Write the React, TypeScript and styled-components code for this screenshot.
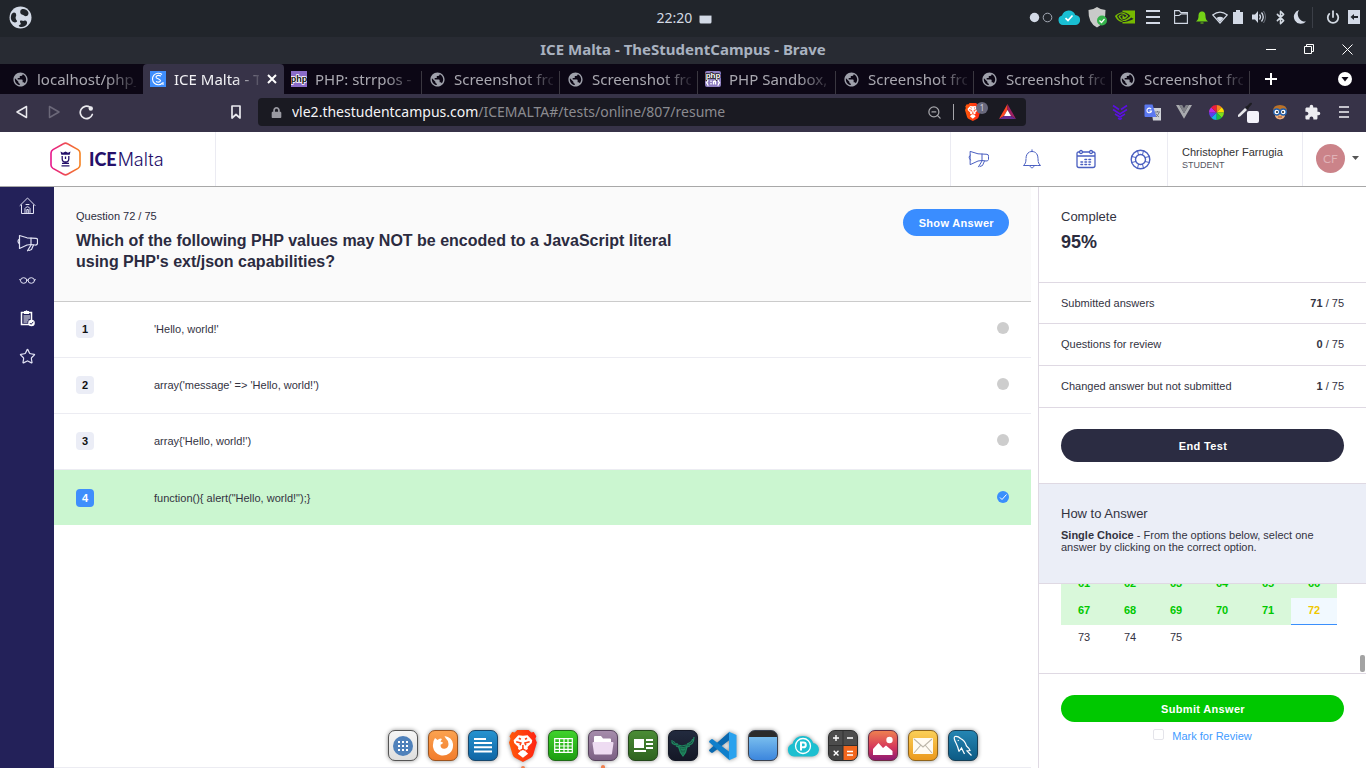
import React from "react";
import styled, { createGlobalStyle, css } from "styled-components";
import { MdPublic, MdExtension } from "react-icons/md";
import { FaLock } from "react-icons/fa";
import { SiNvidia } from "react-icons/si";
import { Star, Bluetooth, Power, ZoomOut } from "lucide-react";

const ui = `"Noto Sans", "Open Sans", sans-serif`;
const body = `"Liberation Sans", Arial, sans-serif`;

const Global = createGlobalStyle`
  *, *::before, *::after { box-sizing: border-box; }
  body { margin: 0; background: #fff; font-family: ${body}; font-size: 11px; color: #2c2c3e; }
  button { font: inherit; color: inherit; border: 0; padding: 0; background: none; cursor: pointer; }
  a { color: inherit; text-decoration: none; }
  h1, h2, p, dl, dd, dt, ol, ul { margin: 0; padding: 0; list-style: none; }
  svg { display: block; flex: none; }
`;

const Screen = styled.div`
  display: flex;
  flex-direction: column;
  height: 100vh;
  overflow: hidden;
`;

/* ---------- desktop panel ---------- */

const Panel = styled.header`
  display: grid;
  grid-template-columns: 1fr auto 1fr;
  align-items: center;
  flex: none;
  height: 37px;
  padding: 0 6px 3px 9px;
  background: #21252b;
  color: #d3dae3;
  font-family: ${ui};
`;

const Clock = styled.div`
  display: flex;
  align-items: center;
  gap: 7px;
  font-size: 14px;
`;

const Tray = styled.div`
  display: flex;
  align-items: center;
  justify-content: flex-end;
`;

const TraySlot = styled.span<{ $w: number }>`
  display: flex;
  align-items: center;
  justify-content: center;
  flex: none;
  width: ${(p) => p.$w}px;
`;

const TrayRule = styled.span`
  width: 1px;
  height: 21px;
  margin-right: 4px;
  background: #3b3f47;
`;

const TitleBar = styled.div`
  display: grid;
  grid-template-columns: 1fr auto 1fr;
  align-items: center;
  flex: none;
  height: 27px;
  padding-bottom: 3px;
  background: #282b33;
  color: #a9b2c0;
  font: 700 15px/24px ${ui};
`;

const WindowButtons = styled.div`
  display: flex;
  justify-content: flex-end;
`;

const WindowButton = styled.button`
  display: flex;
  align-items: center;
  justify-content: center;
  width: 38px;
  height: 24px;
`;

/* ---------- browser ---------- */

const TabStrip = styled.div`
  display: flex;
  flex: none;
  height: 30px;
  padding-left: 5px;
  background: #0c0715;
  font: 400 15px/28px ${ui};
`;

const Tab = styled.div<{ $active?: boolean; $rule?: boolean }>`
  position: relative;
  display: flex;
  align-items: center;
  gap: 8px;
  flex: none;
  width: ${(p) => (p.$active ? 141 : 138)}px;
  padding: 0 7px;
  color: ${(p) => (p.$active ? "#f2f2f5" : "#a9a8b0")};
  ${(p) =>
    p.$active &&
    css`
      background: #373348;
      border-radius: 4px 4px 0 0;
    `}
  ${(p) =>
    p.$rule &&
    css`
      &::after {
        content: "";
        position: absolute;
        right: 0;
        top: 7px;
        bottom: 0;
        width: 1px;
        background: #3a3740;
      }
    `}
`;

const TabText = styled.span`
  flex: 1;
  min-width: 0;
  overflow: hidden;
  white-space: nowrap;
  mask-image: linear-gradient(to right, #000 70%, transparent 105%);
`;

const StripButton = styled.button<{ $push?: boolean }>`
  display: flex;
  align-items: center;
  justify-content: center;
  width: 42px;
  ${(p) => p.$push && "margin-left: auto;"}
`;

const Toolbar = styled.div`
  display: flex;
  align-items: center;
  flex: none;
  height: 38px;
  padding: 0 6px 2px;
  background: #373348;
  color: #e9e9ee;
`;

const ToolButton = styled.button<{ $bookmark?: boolean }>`
  position: relative;
  display: flex;
  align-items: center;
  justify-content: center;
  flex: none;
  width: 32px;
  height: 32px;
  ${(p) => p.$bookmark && "margin: 0 6px 0 118px;"}
`;

const AddressBar = styled.div`
  display: flex;
  align-items: center;
  flex: 1;
  min-width: 0;
  height: 28px;
  margin-right: 78px;
  padding: 0 10px 0 13px;
  border-radius: 4px;
  background: #1a1a22;
  font: 400 14px/28px ${ui};
`;

const Url = styled.span`
  flex: 1;
  min-width: 0;
  margin-left: 10px;
  overflow: hidden;
  white-space: nowrap;
  color: #8b8b90;
  b { font-weight: 400; color: #f4f4f6; }
`;

const AddressRule = styled.span`
  width: 1px;
  height: 16px;
  margin: 0 11px;
  background: #a6a6ab;
`;

const Shield = styled.span`
  position: relative;
  display: flex;
  width: 17px;
  margin-right: 17px;
`;

const ShieldCount = styled.span`
  position: absolute;
  left: 11px;
  top: -1px;
  width: 12px;
  height: 12px;
  border-radius: 6px;
  background: #68687c;
  color: #d5d5e2;
  font-size: 8px;
  line-height: 12px;
  text-align: center;
`;

/* ---------- site header ---------- */

const SiteHeader = styled.header`
  display: flex;
  flex: none;
  height: 55px;
  border-bottom: 1px solid #a8a8a8;
  background: #fff;
`;

const LogoLink = styled.a`
  display: flex;
  align-items: center;
  gap: 8px;
  width: 216px;
  padding-left: 50px;
  border-right: 1px solid #ebebf2;
  color: #25106a;
  font: 300 18px/24px Inter, sans-serif;
  b { font-family: Lato, sans-serif; font-weight: 900; margin-right: 1px; }
`;

const HeaderNav = styled.nav`
  display: flex;
  margin-left: auto;
  border: solid #ebebf2;
  border-width: 0 1px;
  color: #4a5fc1;
`;

const HeaderButton = styled.button`
  display: flex;
  align-items: center;
  justify-content: center;
  width: 54px;
`;

const UserBlock = styled.div`
  width: 135px;
  padding: 14px 0 0 14px;
  border-right: 1px solid #ebebf2;
  font-size: 11px;
  line-height: 13px;
  color: #333;
  small { display: block; font-size: 9px; line-height: 12px; color: #55555f; }
`;

const AccountButton = styled.button`
  display: flex;
  align-items: center;
  gap: 7px;
  width: 63px;
  padding: 0 0 2px 13px;
`;

const Avatar = styled.span`
  width: 29px;
  height: 29px;
  border-radius: 50%;
  background: #cb8389;
  color: #e0b2b6;
  font: 400 12px/29px Lato, sans-serif;
  text-align: center;
`;

/* ---------- page ---------- */

const Page = styled.div`
  display: flex;
  flex: 1;
  min-height: 0;
`;

const Sidebar = styled.nav`
  flex: none;
  width: 54px;
  background: #232159;
  color: #e2e3f4;
`;

const SideList = styled.ul`
  display: grid;
  grid-auto-rows: 1fr;
  height: 188px;
`;

const SideLink = styled.a`
  display: flex;
  align-items: center;
  justify-content: center;
  height: 100%;
`;

const Main = styled.main`
  flex: 1;
  min-width: 0;
  margin-right: 7px;
  border-bottom: 1px solid #ececf2;
`;

const QuestionHead = styled.div`
  display: flex;
  justify-content: space-between;
  align-items: flex-start;
  padding: 22px 22px 29px;
  border-bottom: 1px solid #cbcbcb;
  background: #fafafa;
`;

const QuestionNumber = styled.p`
  margin-bottom: 6px;
  font-size: 11px;
  line-height: 15px;
`;

const QuestionTitle = styled.h1`
  max-width: 640px;
  font-size: 16px;
  line-height: 21px;
  color: #2b2b40;
`;

const PillButton = styled.button<{ $tone: string; $tall?: boolean; $wide?: boolean }>`
  flex: none;
  width: ${(p) => (p.$wide ? "100%" : "auto")};
  height: ${(p) => (p.$tall ? 33 : 27)}px;
  padding: 0 15px 0 16px;
  border-radius: 17px;
  background: ${(p) => p.$tone};
  color: #fff;
  font-size: 11px;
  font-weight: 700;
  letter-spacing: 0.03em;
`;

const Option = styled.label<{ $chosen?: boolean }>`
  display: flex;
  align-items: center;
  height: 56px;
  padding: ${(p) => (p.$chosen ? "1px 22px 0" : "0 22px 1px")};
  border-bottom: 1px solid ${(p) => (p.$chosen ? "#fff" : "#ececf2")};
  background: ${(p) => (p.$chosen ? "#cbf6d0" : "#fff")};
  color: #33333f;
`;

const OptionNumber = styled.span<{ $chosen?: boolean }>`
  width: 18px;
  height: 18px;
  border-radius: 4px;
  background: ${(p) => (p.$chosen ? "#3f8efc" : "#ebedf6")};
  color: ${(p) => (p.$chosen ? "#fff" : "#111")};
  font-weight: 700;
  line-height: 18px;
  text-align: center;
`;

const OptionText = styled.span`
  flex: 1;
  margin-left: 60px;
`;

const Radio = styled.input`
  appearance: none;
  width: 12px;
  height: 12px;
  margin: 0 0 3px;
  border-radius: 50%;
  background: #cdcdcd;
`;

const CheckedMark = styled.span`
  display: grid;
  ${Radio} { grid-area: 1 / 1; }
  ${Radio}:checked { background: #3a8ffc; }
  svg { grid-area: 1 / 1; z-index: 1; pointer-events: none; }
`;

const Aside = styled.aside`
  display: flex;
  flex-direction: column;
  flex: none;
  width: 328px;
  border-left: 1px solid #dfd9e3;
`;

const Block = styled.section<{ $tint?: boolean }>`
  flex: none;
  padding: 21px 22px;
  border-bottom: 1px solid #dfd9e3;
  background: ${(p) => (p.$tint ? "#ebeef7" : "#fff")};
`;

const BlockTitle = styled.h2`
  font-size: 13px;
  font-weight: 400;
  line-height: 18px;
  color: #33333f;
`;

const Percent = styled.p`
  padding: 5px 0 8px;
  font-size: 18px;
  font-weight: 700;
  line-height: 22px;
`;

const Stats = styled.dl`
  flex: none;
`;

const Stat = styled.div`
  display: flex;
  justify-content: space-between;
  align-items: center;
  height: 42px;
  padding: 0 22px 1px;
  border-bottom: 1px solid #dfd9e3;
  color: #33333f;
  &:first-child { height: 41px; }
`;

const HelpText = styled.p`
  padding: 6px 0 9px;
  line-height: 12px;
  color: #33333f;
`;

const NumbersPane = styled.div`
  position: relative;
  display: flex;
  flex: 1;
  flex-direction: column;
  justify-content: flex-end;
  min-height: 0;
  overflow: hidden;
  padding: 0 22px 21px;
  border-bottom: 1px solid #dfd9e3;
`;

const Numbers = styled.div`
  display: grid;
  flex: none;
  grid-template-columns: repeat(6, 46px);
  grid-auto-rows: 27px;
`;

const numberStyles = {
  done: css`
    background: #d9f8da;
    color: #00c800;
    font-weight: 700;
  `,
  current: css`
    background: #f1f9ff;
    color: #f0c800;
    font-weight: 700;
    border-bottom: 1px solid #3a8ffc;
  `,
  open: css`
    color: #33333f;
  `,
};

const NumberButton = styled.button<{ $state: keyof typeof numberStyles }>`
  padding-bottom: 3px;
  ${(p) => numberStyles[p.$state]}
`;

const ScrollThumb = styled.span`
  position: absolute;
  right: 1px;
  bottom: 1px;
  width: 5px;
  height: 17px;
  border-radius: 2px;
  background: #a3a3a3;
`;

const SubmitBlock = styled.div`
  flex: none;
  height: 94px;
  padding: 21px 22px 0;
`;

const ReviewLabel = styled.label`
  display: flex;
  justify-content: center;
  gap: 8px;
  padding-top: 7px;
  color: #3f9bff;
  line-height: 15px;
`;

const CheckBox = styled.input`
  appearance: none;
  width: 11px;
  height: 11px;
  margin: 0;
  border: 1px solid #e4e4ea;
  border-radius: 2px;
  background: #fff;
`;

/* ---------- dock ---------- */

const Dock = styled.nav`
  position: fixed;
  left: 0;
  right: 0;
  bottom: 7px;
  display: flex;
  justify-content: center;
  gap: 8px;
  pointer-events: none;
`;

const DockItem = styled.button<{ $tile?: string; $edge?: string; $running?: boolean }>`
  position: relative;
  display: flex;
  align-items: center;
  justify-content: center;
  width: 32px;
  height: 31px;
  pointer-events: auto;
  filter: drop-shadow(0 0 2px rgba(0, 0, 0, 0.45));
  ${(p) =>
    p.$tile &&
    css`
      border: 1px solid ${p.$edge};
      border-radius: 7px;
      background: ${p.$tile};
      width: 30px;
      margin: 0 1px;
    `}
  ${(p) =>
    p.$running &&
    css`
      &::after {
        content: "";
        position: absolute;
        left: 50%;
        bottom: -8px;
        width: 4px;
        height: 3px;
        margin-left: -2px;
        border-radius: 2px 2px 0 0;
        background: #f08050;
      }
    `}
`;

/* ---------- drawings ---------- */

const line = { fill: "none", stroke: "currentColor", strokeLinecap: "round", strokeLinejoin: "round" } as const;

const MenuLogo = () => (
  <svg width="23" height="23" viewBox="0 0 23 23">
    <circle cx="11.5" cy="11.5" r="11" fill="#d3dae6" />
    <path d="M2 10c.5-3 3-4.500 4.500-3 .5.500.5 1 .7 2 .3 1-1 2-.5 3.500.5 2 2 2 1.300 3C6 17.500 2 16 1.800 12zM11.500 4.500c.5-2 4-2 6-.5 2 1.500 2.500 3.500 1.500 5s-3 1.500-4 .5-2-.5-3-1.500c-.8-1-1-2-.5-3.500zM11.500 14.500c1.500-.5 2.500.8 3.500.3 2-1 3.500.7 3 2.700s-3 3.500-5.500 3.500-3.500-1.500-2-2 1.500-1.200 1-2-.8-2 0-2.500z" fill="#21252b" />
  </svg>
);

const BraveLion = ({ size }: { size: number }) => (
  <svg width={(size * 27) / 31} height={size} viewBox="0 0 27 31">
    <defs>
      <linearGradient id="lion">
        <stop offset="0" stopColor="#ff5a0a" />
        <stop offset="1" stopColor="#ff2414" />
      </linearGradient>
    </defs>
    <path d="M8 0h11l2.500 2.500L24 2l2.500 4-1 2.500L27 12l-3.500 12q-.7 1.800-2.300 3L13.500 31l-7.700-4q-1.600-1.200-2.300-3L0 12l1.500-3.500L.5 6 3 2l2.500.5z" fill="url(#lion)" />
    <path d="M13.500 5.500L18 5l4.500 5-.5 2.500-4 4 .3 2-2.800 1.500 3 3-5 4-5-4 3-3-2.800-1.500.3-2-4-4L4.500 10 9 5z" fill="#fff" />
    <path d="M7 11.500l4.500 1.200-.8 2M20 11.500l-4.500 1.200.8 2M13.500 14.500v4l-2.500 1.200M13.500 18.500l2.500 1.200M9.500 8l2 1M17.500 8l-2 1" fill="none" stroke="#ff3d10" strokeWidth="1.500" />
  </svg>
);

const Megaphone = ({ stroke = 1 }: { stroke?: number }) => (
  <svg width="21" height="18" viewBox="0 0 21 18" {...line} strokeWidth={stroke}>
    <path d="M2.500 1.500l7.500 2.300 9 .5q1.800.2 1.500 2.200v3q-.5 1.800-2.500 1.500l-4-.5-4 .5-7.500 3.500z" />
    <path d="M14 4v6.500M2.500 5Q-.5 7 2.500 10M10.500 16.800l3.500-5.800M16.500 11l-2 4.500-2.500 1" />
  </svg>
);

const BellIcon = () => (
  <svg width="20" height="20" viewBox="0 0 20 20" {...line}>
    <path d="M1.500 16.500c2-2 2.500-3 2.500-7C4 5 6.500 2.500 10 2.500S16 5 16 9.500c0 4 .5 5 2.500 7zM10 .8v1.500M8 17c.5 2.500 3.500 2.500 4 0" strokeDasharray="7 1" />
  </svg>
);

const CalendarIcon = () => (
  <svg width="20" height="20" viewBox="0 0 20 20" {...line} strokeWidth="1.300">
    <path d="M3.500 3H2.500q-1.500 0-1.500 1.500v12Q1 18.500 3 18.500h14q2 0 2-2v-12Q19 3 17.500 3h-1M6.500 3h7M1.500 7h17" />
    <circle cx="5" cy="3" r="1.500" />
    <circle cx="15" cy="3" r="1.500" />
    <path d="M9 10.500h1.500M13 10.500h1.500M5 13h1.500M9 13h1.500M13 13h1.500M5 15.500h1.500M9 15.500h1.500M13 15.500h1" strokeWidth="1.600" />
  </svg>
);

const BuoyIcon = () => (
  <svg width="21" height="21" viewBox="0 0 21 21" {...line} strokeWidth="1.400">
    <circle cx="10.500" cy="10.500" r="9.300" />
    <circle cx="10.500" cy="10.500" r="5" />
    <path d="M7.500 1.800l1 4M13.500 1.800l-1 4M7.500 19.200l1-4M13.500 19.200l-1-4M1.800 7.500l4 1M1.800 13.500l4-1M19.200 7.500l-4 1M19.200 13.500l-4-1" strokeWidth="1" />
  </svg>
);

const HouseIcon = () => (
  <svg width="17" height="17" viewBox="0 0 17 17" {...line}>
    <path d="M1 8.500L8.500 1 16 8.500M2.500 8v8.500h12V8M6 16v-4.500q2.500-3.500 5 0V16M7.800 16v-3.500h1.500V16M7 7.500h3" />
  </svg>
);

const GlassesIcon = () => (
  <svg width="17" height="9" viewBox="0 0 17 9" {...line}>
    <ellipse cx="4.700" cy="4.500" rx="3.200" ry="2.800" />
    <ellipse cx="12.300" cy="4.500" rx="3.200" ry="2.800" />
    <path d="M7.800 4h1.400M1.500 4L.6 3.700M15.500 4l.9-.3" />
  </svg>
);

const ClipboardIcon = () => (
  <svg width="15" height="17" viewBox="0 0 15 17">
    <path d="M1.500 2.500h10v12h-10z" fill="none" stroke="#fff" strokeWidth="1.500" />
    <path d="M4 1h1.500q1-1.500 2 0H9v3H4z" fill="#fff" />
    <path d="M3.500 6h6.500M3.500 8h6.500M3.500 10h5M3.500 12h4" stroke="#fff" strokeWidth="1" />
    <circle cx="11.500" cy="13" r="3.300" fill="#fff" />
    <path d="M9.800 13l1.300 1.300 2.200-2.500" fill="none" stroke="#232159" strokeWidth="1" />
  </svg>
);

const IceLogo = () => (
  <svg width="31" height="34" viewBox="0 0 31 34" fill="none">
    <defs>
      <linearGradient id="ice-ring">
        <stop offset="0" stopColor="#e6168b" />
        <stop offset="1" stopColor="#f58220" />
      </linearGradient>
    </defs>
    <path d="M13.500 1.700q2-1.200 4 0L28 7.600q2 1.200 2 3.400v12q0 2.200-2 3.400L17.500 32.300q-2 1.200-4 0L3 26.400Q1 25.200 1 23V11q0-2.200 2-3.400z" stroke="url(#ice-ring)" strokeWidth="1.600" />
    <path d="M10.500 9.500l2.500 1.300 2.500-1.300 2.500 1.300 2.500-1.300-.8 3.300h-8.400z" fill="#25106a" />
    <path d="M12.200 14v3q0 3 3.300 3t3.300-3v-3M15.500 14.500v2.500M12 21.300h7M11.500 23.800h8" stroke="#25106a" strokeWidth="1.300" />
  </svg>
);

const Translate = () => (
  <svg width="17" height="17" viewBox="0 0 17 17">
    <path d="M7 4h10v12.500H9z" fill="#cfd2d8" />
    <path d="M.5 1.500Q.5.500 1.500.500h7l4 12.500H1.500q-1 0-1-1z" fill="#5b78f0" />
    <path d="M7.200 5.200A2.300 2.300 0 1 0 7.500 7H5.300" fill="none" stroke="#fff" strokeWidth="1.100" />
    <path d="M11 8h5M13.500 7v1M15 8.500q-1 3-3 4.500M12 9.500q1 2.500 3 3.500" fill="none" stroke="#6c7078" strokeWidth=".9" />
  </svg>
);

const wheel = ["#f7831e", "#ffdc00", "#7fe01a", "#1fc23c", "#16b4e0", "#5a3ff0", "#c02be0", "#ee1c3a"];
const ColorWheel = () => (
  <svg width="15" height="15" viewBox="-8 -8 16 16">
    {wheel.map((c, i) => (
      <path key={c} d="M0 0V-8A8 8 0 0 1 5.660-5.660z" fill={c} transform={`rotate(${i * 45})`} />
    ))}
  </svg>
);

const CloudCheck = () => (
  <svg width="22" height="15" viewBox="0 0 22 15">
    <path d="M5 15a4.800 4.800 0 0 1-1-9.400A7 7 0 0 1 17.300 5 5 5 0 0 1 17 15z" fill="#19bfd3" />
    <path d="M7.500 8.200l2.500 2.300 4.500-5" fill="none" stroke="#fff" strokeWidth="1.700" />
  </svg>
);

const PhpIcon = ({ sandbox }: { sandbox?: boolean }) => (
  <svg width="16" height="16" viewBox="0 0 16 16">
    <rect width="16" height="16" rx={sandbox ? 2 : 0} fill={sandbox ? "#8f7fc0" : "#8a6cc8"} />
    <text x="8" y={sandbox ? 7 : 11} textAnchor="middle" fontFamily="Liberation Sans" fontWeight="700" fontSize={sandbox ? 8 : 9} fill={sandbox ? "#fff" : "#111"} stroke={sandbox ? "#222" : "#fff"} strokeWidth="1.500" paintOrder="stroke">php</text>
    {sandbox && <path d="M3.500 9q-1 0-1 1.500l-1 1.200 1 1.200q0 1.500 1 1.500M12.500 9q1 0 1 1.500l1 1.200-1 1.200q0 1.500-1 1.500M6 9.500v1.500M6 12v1.500M8.500 13.500v-3q2-1 2 0v3" fill="none" stroke="#fff" strokeWidth="1.300" />}
  </svg>
);

const CampusIcon = () => (
  <svg width="16" height="16" viewBox="0 0 16 16" fill="none" stroke="#fff">
    <path d="M0 0h16v16H0z" fill="#3f8efc" stroke="none" />
    <path d="M12 3.500A5.800 5.800 0 1 0 12.500 12" strokeWidth="1.100" />
    <path d="M11 5Q7 3.500 6 5.800c-.5 2 4.500 2 4.500 4Q9.500 12 6 10.500M13 11v3" strokeWidth="1.100" />
  </svg>
);

const Globe = () => <MdPublic size={17} color="#9fa1ab" />;

const tabs = [
  { text: "localhost/php_", icon: <Globe /> },
  { text: "ICE Malta - T", icon: <CampusIcon />, active: true },
  { text: "PHP: strrpos - M", icon: <PhpIcon />, rule: true },
  { text: "Screenshot from", icon: <Globe />, rule: true },
  { text: "Screenshot from", icon: <Globe />, rule: true },
  { text: "PHP Sandbox, t", icon: <PhpIcon sandbox />, rule: true },
  { text: "Screenshot from", icon: <Globe />, rule: true },
  { text: "Screenshot from", icon: <Globe />, rule: true },
  { text: "Screenshot from", icon: <Globe />, rule: true },
];

const extensions = [
  {
    name: "Daily reader",
    icon: (
      <svg width="16" height="16" viewBox="0 0 16 16" fill="none" stroke="#5a10e0" strokeWidth="1.600">
        <path d="M1 1.500L7 5.500M15 1.500L9 5.500M1 5.500l7 4.500 7-4.500M3 10l5 3 5-3M6 14.200l2 1 2-1" />
      </svg>
    ),
  },
  { name: "Translate", icon: <Translate /> },
  {
    name: "Vue devtools",
    icon: (
      <svg width="16" height="14" viewBox="0 0 16 14">
        <path d="M0 0h3.200L8 8.300 12.800 0H16L8 13.800z" fill="#a9abaf" />
        <path d="M3.200 0h3L8 3.200 9.800 0h3L8 8.300z" fill="#808288" />
      </svg>
    ),
  },
  { name: "Color wheel", icon: <ColorWheel /> },
  {
    name: "Color picker",
    icon: (
      <svg width="22" height="22" viewBox="0 0 22 22">
        <path d="M1 14l7-7 2 2-7 6.500-2 .5z" fill="#e8e8ec" />
        <path d="M8 6l2-1 3-3q2-1 2 1l-3 3.500-1 2.500z" fill="#1d1d22" />
        <rect x="10" y="10" width="12" height="12" rx="2" fill="#f4f3fb" />
      </svg>
    ),
  },
  {
    name: "Avatar",
    icon: (
      <svg width="16" height="16" viewBox="0 0 16 16">
        <path d="M1 7Q1 1 8 1t7 6l-1 3H2z" fill="#b9722a" />
        <path d="M3 6h10v6q-1 3-5 3.500Q4 15 3 12z" fill="#efb078" />
        <circle cx="4.700" cy="8" r="3" fill="#fff" stroke="#1f5fae" strokeWidth="1.400" />
        <circle cx="11.300" cy="8" r="3" fill="#fff" stroke="#1f5fae" strokeWidth="1.400" />
        <circle cx="5" cy="8" r="1" fill="#222" />
        <circle cx="11" cy="8" r="1" fill="#222" />
        <path d="M6 13h4" stroke="#a04a2a" />
      </svg>
    ),
  },
  { name: "Extensions", icon: <MdExtension size={17} color="#ededf1" /> },
  {
    name: "Menu",
    icon: (
      <svg width="10" height="12" viewBox="0 0 10 12" stroke="#c4c3cc" strokeWidth="2">
        <path d="M0 1h10M0 6h10M0 11h10" />
      </svg>
    ),
  },
];

const options = ["'Hello, world!'", "array('message' => 'Hello, world!')", "array{'Hello, world!')", 'function(){ alert("Hello, world!");}'];

const stats = [
  ["Submitted answers", 71],
  ["Questions for review", 0],
  ["Changed answer but not submitted", 1],
] as const;

const numbers = Array.from({ length: 15 }, (_, i) => 61 + i);

const dock = [
  {
    name: "Applications",
    tile: "linear-gradient(#f6f6f6, #dedede)",
    edge: "#555",
    icon: (
      <svg width="22" height="22" viewBox="0 0 22 22">
        <circle cx="11" cy="11" r="10" fill="#4f81bb" />
        {[5, 9, 13].map((x) => [6, 10, 14].map((y) => <rect key={`${x}-${y}`} x={x + 1} y={y} width="2" height="2" fill="#fff" />))}
      </svg>
    ),
  },
  {
    name: "Firefox",
    tile: "linear-gradient(#fba24f, #f27c2c)",
    edge: "#9b5420",
    icon: (
      <svg width="22" height="21" viewBox="0 0 22 21">
        <path d="M3 3l2.500 2Q8 2.500 10 4L8.500 6.500l2.500 1q0 1.500-2.500 2.200 0 4.300 4 4 4-.5 4-4.700 0-3.500-3-6L12.500 1Q20 2 21 9q.5 6-3.500 9.300-4 3-9 2Q2 18 1 12 .5 6.500 3 3z" fill="#fff" />
      </svg>
    ),
  },
  {
    name: "Writer",
    tile: "linear-gradient(#2692cf, #0f66a5)",
    edge: "#17476c",
    icon: (
      <svg width="18" height="15" viewBox="0 0 18 15" stroke="#fff" strokeWidth="2">
        <path d="M0 1h12M0 5h18M0 9.300h18M0 13.500h18" />
      </svg>
    ),
  },
  { name: "Brave", running: true, icon: <BraveLion size={32} /> },
  {
    name: "Calc",
    tile: "linear-gradient(#3fd22c, #1d9d10)",
    edge: "#1f6b18",
    icon: (
      <svg width="19" height="15" viewBox="0 0 19 15" fill="none" stroke="#fff">
        <path d="M.7.700h17.600v13.600H.7zM5.500 1v13M10 1v13M14 1v13M1 4.500h17M1 8h17M1 11.300h17" strokeWidth="1.200" />
      </svg>
    ),
  },
  {
    name: "Files",
    running: true,
    tile: "linear-gradient(#a58cab, #7c6084)",
    edge: "#56435d",
    icon: (
      <svg width="22" height="19" viewBox="0 0 22 19">
        <path d="M2 1q0-1 1-1h6l2 2.500h7q1 0 1 1V8H2z" fill="#fff" />
        <path d="M1.500 6h19q1 0 1 1L20 17.500q0 1-1 1H3q-1 0-1-1L.5 7q0-1 1-1z" fill="#eedcf2" />
      </svg>
    ),
  },
  {
    name: "News",
    tile: "linear-gradient(#4a8c35, #2f6320)",
    edge: "#24481b",
    icon: (
      <svg width="19" height="15" viewBox="0 0 19 15" fill="#fff">
        <path d="M0 1h10v9H0zM12 1h7v2h-7zM12 5h7v2h-7zM12 9h7v2h-7zM0 12h12v2H0z" />
      </svg>
    ),
  },
  {
    name: "Bull",
    tile: "linear-gradient(#222a3e, #141826)",
    edge: "#141826",
    icon: (
      <svg width="26" height="24" viewBox="0 0 26 24" fill="none" stroke="#1f8a60" strokeWidth="1.200">
        <path d="M2 6Q1 11 8 11l4 1 4-1q8 1 8-8M3.500 7Q4 9.500 8 10M22.500 5q0 3-5.500 5M6 12l2.500 1M20 12l-3 1" />
        <path d="M8.500 12.500l2 6 2.500 3.500 2.500-3.500 1.500-6-4 1zM11 15l2 1 2-1M11.500 19h3" fill="#1a6b4d" />
      </svg>
    ),
  },
  {
    name: "Code",
    icon: (
      <svg width="30" height="30" viewBox="0 0 30 30">
        <path d="M1.500 18.500L21.500.8V9L5 21.500q-1 .8-2 0l-1.500-1.300q-.8-.8 0-1.700z" fill="#0a69b0" />
        <path d="M1.500 11.500l20 17.700V21L5 8.500q-1-.8-2 0L1.500 9.800q-.8.800 0 1.700z" fill="#0f7fcb" />
        <path d="M21 .8L28.500 4v22L21 29.200z" fill="#2aa2ee" />
      </svg>
    ),
  },
  { name: "Window", tile: "linear-gradient(#2b2b2b 0 6px, #78bdee 6px, #3c86dd)", edge: "#3b4250", icon: null },
  {
    name: "pCloud",
    icon: (
      <svg width="32" height="22" viewBox="0 0 32 22">
        <path d="M7 21.500A6.500 6.500 0 0 1 5.500 8.800 11 11 0 0 1 26.300 8 6.800 6.800 0 0 1 25 21.500z" fill="#1cbfd0" />
        <circle cx="16" cy="11" r="7.500" fill="none" stroke="#fff" strokeWidth="1.300" />
        <path d="M14 15.500V7.500h2.500q2.300 0 2.300 2.400t-2.300 2.400H14" fill="none" stroke="#fff" strokeWidth="2" />
      </svg>
    ),
  },
  {
    name: "Calculator",
    tile: "conic-gradient(#4c4c4c 0 25%, #f2661d 25% 50%, #454545 50% 75%, #4c4c4c 75%)",
    edge: "#2d2d2d",
    icon: (
      <svg width="28" height="29" viewBox="0 0 28 29" stroke="#fff" strokeWidth="1.400" fill="none">
        <path d="M14 0v29M0 14.500h28" stroke="#303030" strokeWidth="1" />
        <path d="M4 7h6M7 4v6M18 7h6M4.700 19.700l4.800 4.800M9.500 19.700l-4.800 4.800M18 20.500h6M18 24h6" />
      </svg>
    ),
  },
  {
    name: "Photos",
    tile: "linear-gradient(#ee8050, #d6395b 55%, #8e1a72)",
    edge: "#6c2c44",
    icon: (
      <svg width="22" height="20" viewBox="0 0 22 20" fill="#fff">
        <circle cx="17.500" cy="4" r="3.200" />
        <path d="M1 19V13l5.500-6 4.500 5 3-2.500 6.500 5.500V19z" />
      </svg>
    ),
  },
  {
    name: "Mail",
    tile: "linear-gradient(#fbcf57, #eb991d)",
    edge: "#8f641b",
    icon: (
      <svg width="20" height="16" viewBox="0 0 20 16">
        <rect width="20" height="16" rx="1" fill="#fffbf3" />
        <path d="M1 1l9 8 9-8M1 15l6.500-7.500M19 15l-6.500-7.500" fill="none" stroke="#bdb7aa" strokeWidth="1.100" />
      </svg>
    ),
  },
  {
    name: "Workbench",
    tile: "linear-gradient(#2485b3, #0d5b85)",
    edge: "#173f56",
    icon: (
      <svg width="22" height="23" viewBox="0 0 22 23" fill="none" stroke="#fff" strokeWidth="1.200">
        <path d="M7 17.500Q6 13 4 9 1 3.500 3 2.500 6 2 8.500 4.500 13 6.500 14.500 12q2.500 2 3.500 4.500l-3 .5 4.500 4.500M7 17.500l2.500-3.500 3 6M6 6l.5 1" />
      </svg>
    ),
  },
];

export default function App() {
  return (
    <Screen>
      <Global />

      <Panel>
        <MenuLogo />
        <Clock>
          <time>22:20</time>
          <svg width="13" height="14" viewBox="0 0 13 14">
            <path d="M.5 6h12v6q0 1.500-1.500 1.500H2Q.5 13.500.5 12z" fill="#d3dae6" />
            <path d="M.5 5.500h12" stroke="#6a7079" />
          </svg>
        </Clock>
        <Tray>
          <TraySlot $w={13}><svg width="11" height="11"><circle cx="5.500" cy="5.500" r="4.700" fill="#d3dae6" /></svg></TraySlot>
          <TraySlot $w={13}><svg width="11" height="11"><circle cx="5.500" cy="5.500" r="4.300" fill="none" stroke="#a5abb6" /></svg></TraySlot>
          <TraySlot $w={30}><CloudCheck /></TraySlot>
          <TraySlot $w={26}>
            <svg width="19" height="21" viewBox="0 0 19 21">
              <path d="M9 0q4 3 8.500 3 .5 13-8.500 17.500Q0 16 .5 3 5 3 9 0z" fill="#c9cac9" />
              <circle cx="14" cy="13.500" r="5" fill="#34b24b" />
              <path d="M11.500 13.500l2 2 3-3.500" fill="none" stroke="#fff" strokeWidth="1.200" />
            </svg>
          </TraySlot>
          <TraySlot $w={30}><SiNvidia size={20} color="#76b900" /></TraySlot>
          <TraySlot $w={26}><svg width="14" height="14" stroke="#d3dae6" strokeWidth="2"><path d="M0 1h14M0 7h14M0 13h14" /></svg></TraySlot>
          <TraySlot $w={30}>
            <svg width="14" height="14" viewBox="0 0 14 14" fill="none" stroke="#d3dae6" strokeWidth="1.100"><path d="M.6 13.400V.600h4.500L7 2.600h6.400v10.800zM.6 5.500h4.500L7 4h6.400" /></svg>
          </TraySlot>
          <TraySlot $w={12}>
            <svg width="12" height="13" viewBox="0 0 12 13"><path d="M6 .5c3 0 3.500 2.500 3.500 5 0 2 1 4 2.500 5H0c1.500-1 2.500-3 2.500-5 0-2.500.5-5 3.500-5zM4.500 11.500h3v1h-3z" fill="#73d216" /></svg>
          </TraySlot>
          <TraySlot $w={24}>
            <svg width="16" height="13" viewBox="0 0 16 13" fill="none" stroke="#d3dae6"><path d="M.7 4Q8-1.800 15.300 4L8 12z" strokeWidth="1.200" /><path d="M4.500 7Q8 4.500 11.500 7L8 11z" fill="#d3dae6" stroke="none" /></svg>
          </TraySlot>
          <TraySlot $w={12}><svg width="10" height="14"><path d="M3 0h4v2h3v12H0V2h3z" fill="#d3dae6" /></svg></TraySlot>
          <TraySlot $w={30}>
            <svg width="14" height="14" viewBox="0 0 14 14" fill="none" stroke="#d3dae6"><path d="M0 4.500h3l3-3.500v12L3 9.500H0z" fill="#d3dae6" stroke="none" /><path d="M7.500 4.500q2 2.500 0 5M9.500 2.500q3.500 4.500 0 9" strokeWidth="1.300" /><path d="M11.500 1q4 6 0 12" stroke="#6a707a" /></svg>
          </TraySlot>
          <TraySlot $w={12}><Bluetooth size={15} strokeWidth={2.500} /></TraySlot>
          <TraySlot $w={26}><svg width="13" height="14" viewBox="0 0 13 14"><path d="M6 0A7 7 0 1 0 13 11.500 7.500 7.500 0 0 1 6 0z" fill="#d3dae6" /></svg></TraySlot>
          <TrayRule />
          <TraySlot $w={31}><Power size={14} strokeWidth={3} /></TraySlot>
          <TraySlot $w={12}><svg width="12" height="14"><path d="M0 0h12v14H0z" fill="#d3dae6" /><path d="M10 7H5" stroke="#21252b" strokeWidth="2" /><path d="M6 4L2.500 7 6 10z" fill="#21252b" /></svg></TraySlot>
        </Tray>
      </Panel>

      <TitleBar>
        <span />
        <span>ICE Malta - TheStudentCampus - Brave</span>
        <WindowButtons>
          <WindowButton aria-label="Minimize"><svg width="10" height="10" stroke="#fff"><path d="M0 5.500h10" /></svg></WindowButton>
          <WindowButton aria-label="Restore"><svg width="10" height="10" fill="none" stroke="#fff"><path d="M.5 2.500h7v7h-7zM2.500 2.500v-2h7v7h-2" /></svg></WindowButton>
          <WindowButton aria-label="Close"><svg width="11" height="11" stroke="#fff"><path d="M.5.500l10 10M10.500.500l-10 10" /></svg></WindowButton>
        </WindowButtons>
      </TitleBar>

      <TabStrip>
        {tabs.map((t, i) => (
          <Tab key={i} $active={t.active} $rule={t.rule}>
            {t.icon}
            <TabText>{t.text}</TabText>
            {t.active && <svg width="10" height="10" stroke="#fff" strokeWidth="2"><path d="M1 1l8 8M9 1l-8 8" /></svg>}
          </Tab>
        ))}
        <StripButton aria-label="New tab"><svg width="12" height="12" stroke="#fff" strokeWidth="2"><path d="M6 0v12M0 6h12" /></svg></StripButton>
        <StripButton aria-label="Search tabs" $push><svg width="14" height="14"><circle cx="7" cy="7" r="7" fill="#fff" /><path d="M3.500 5h7L7 9.500z" fill="#0c0715" /></svg></StripButton>
      </TabStrip>

      <Toolbar>
        <ToolButton aria-label="Back"><svg width="12" height="14" {...line} strokeWidth="1.500"><path d="M10.500 1.500v11L1 7z" /></svg></ToolButton>
        <ToolButton aria-label="Forward"><svg width="12" height="14" {...line} stroke="#6b6879" strokeWidth="1.500"><path d="M1.500 1.500v11L11 7z" /></svg></ToolButton>
        <ToolButton aria-label="Reload"><svg width="15" height="15" {...line} strokeWidth="1.700"><path d="M13.300 9.500A6.200 6.200 0 1 1 11 2.300" /><circle cx="11.800" cy="3.500" r="2.200" fill="currentColor" stroke="none" /></svg></ToolButton>
        <ToolButton aria-label="Bookmark" $bookmark><svg width="10" height="14" {...line} strokeWidth="1.700"><path d="M1 1h8v12L5 9.500 1 13z" /></svg></ToolButton>
        <AddressBar>
          <FaLock size={11} color="#9a9aa2" />
          <Url><b>vle2.thestudentcampus.com</b>/ICEMALTA#/tests/online/807/resume</Url>
          <ZoomOut size={15} color="#a6a6ab" strokeWidth={2} />
          <AddressRule />
          <Shield><BraveLion size={18} /><ShieldCount>1</ShieldCount></Shield>
          <svg width="17" height="16" viewBox="0 0 17 16">
            <path d="M8.500 0L0 15l5-3 3.500-6z" fill="#ff4724" />
            <path d="M8.500 0L17 15l-5-3-3.500-6z" fill="#9e1f63" />
            <path d="M0 15h17l-5-3H5z" fill="#662d91" />
            <path d="M8.500 6L12 12H5z" fill="#fff" />
          </svg>
        </AddressBar>
        {extensions.map((e) => (
          <ToolButton key={e.name} aria-label={e.name}>{e.icon}</ToolButton>
        ))}
      </Toolbar>

      <SiteHeader>
        <LogoLink href="#home">
          <IceLogo />
          <span><b>ICE</b>Malta</span>
        </LogoLink>
        <HeaderNav>
          <HeaderButton aria-label="Announcements"><Megaphone /></HeaderButton>
          <HeaderButton aria-label="Notifications"><BellIcon /></HeaderButton>
          <HeaderButton aria-label="Calendar"><CalendarIcon /></HeaderButton>
          <HeaderButton aria-label="Help"><BuoyIcon /></HeaderButton>
        </HeaderNav>
        <UserBlock>
          Christopher Farrugia
          <small>STUDENT</small>
        </UserBlock>
        <AccountButton aria-label="Account">
          <Avatar>CF</Avatar>
          <svg width="7" height="4"><path d="M0 0h7L3.500 4z" fill="#555" /></svg>
        </AccountButton>
      </SiteHeader>

      <Page>
        <Sidebar>
          <SideList>
            <li><SideLink href="#home" aria-label="Home"><HouseIcon /></SideLink></li>
            <li><SideLink href="#news" aria-label="Announcements"><Megaphone stroke={1.2} /></SideLink></li>
            <li><SideLink href="#read" aria-label="Reading"><GlassesIcon /></SideLink></li>
            <li><SideLink href="#tests" aria-label="Tests"><ClipboardIcon /></SideLink></li>
            <li><SideLink href="#saved" aria-label="Saved"><Star size={17} strokeWidth={1.700} /></SideLink></li>
          </SideList>
        </Sidebar>

        <Main>
          <QuestionHead>
            <div>
              <QuestionNumber>Question 72 / 75</QuestionNumber>
              <QuestionTitle>Which of the following PHP values may NOT be encoded to a JavaScript literal using PHP's ext/json capabilities?</QuestionTitle>
            </div>
            <PillButton $tone="#3a8dff">Show Answer</PillButton>
          </QuestionHead>
          {options.map((text, i) => (
            <Option key={text} $chosen={i === 3}>
              <OptionNumber $chosen={i === 3}>{i + 1}</OptionNumber>
              <OptionText>{text}</OptionText>
              <CheckedMark>
                <Radio type="radio" name="answer" defaultChecked={i === 3} />
                {i === 3 && <svg width="12" height="12" fill="none" stroke="#fff"><path d="M3 6.500l2 2 4.500-5" /></svg>}
              </CheckedMark>
            </Option>
          ))}
        </Main>

        <Aside>
          <Block>
            <BlockTitle>Complete</BlockTitle>
            <Percent>95%</Percent>
          </Block>
          <Stats>
            {stats.map(([label, value]) => (
              <Stat key={label}>
                <dt>{label}</dt>
                <dd><b>{value}</b> / 75</dd>
              </Stat>
            ))}
          </Stats>
          <Block>
            <PillButton $tone="#2b2c42" $tall $wide>End Test</PillButton>
          </Block>
          <Block $tint>
            <BlockTitle>How to Answer</BlockTitle>
            <HelpText><b>Single Choice</b> - From the options below, select one answer by clicking on the correct option.</HelpText>
          </Block>
          <NumbersPane>
            <Numbers>
              {numbers.map((n) => (
                <NumberButton key={n} $state={n < 72 ? "done" : n === 72 ? "current" : "open"}>{n}</NumberButton>
              ))}
            </Numbers>
            <ScrollThumb />
          </NumbersPane>
          <SubmitBlock>
            <PillButton $tone="#00c800" $wide>Submit Answer</PillButton>
            <ReviewLabel>
              <CheckBox type="checkbox" />
              Mark for Review
            </ReviewLabel>
          </SubmitBlock>
        </Aside>
      </Page>

      <Dock aria-label="Dock">
        {dock.map((d) => (
          <DockItem key={d.name} aria-label={d.name} $tile={d.tile} $edge={d.edge} $running={d.running}>{d.icon}</DockItem>
        ))}
      </Dock>
    </Screen>
  );
}
